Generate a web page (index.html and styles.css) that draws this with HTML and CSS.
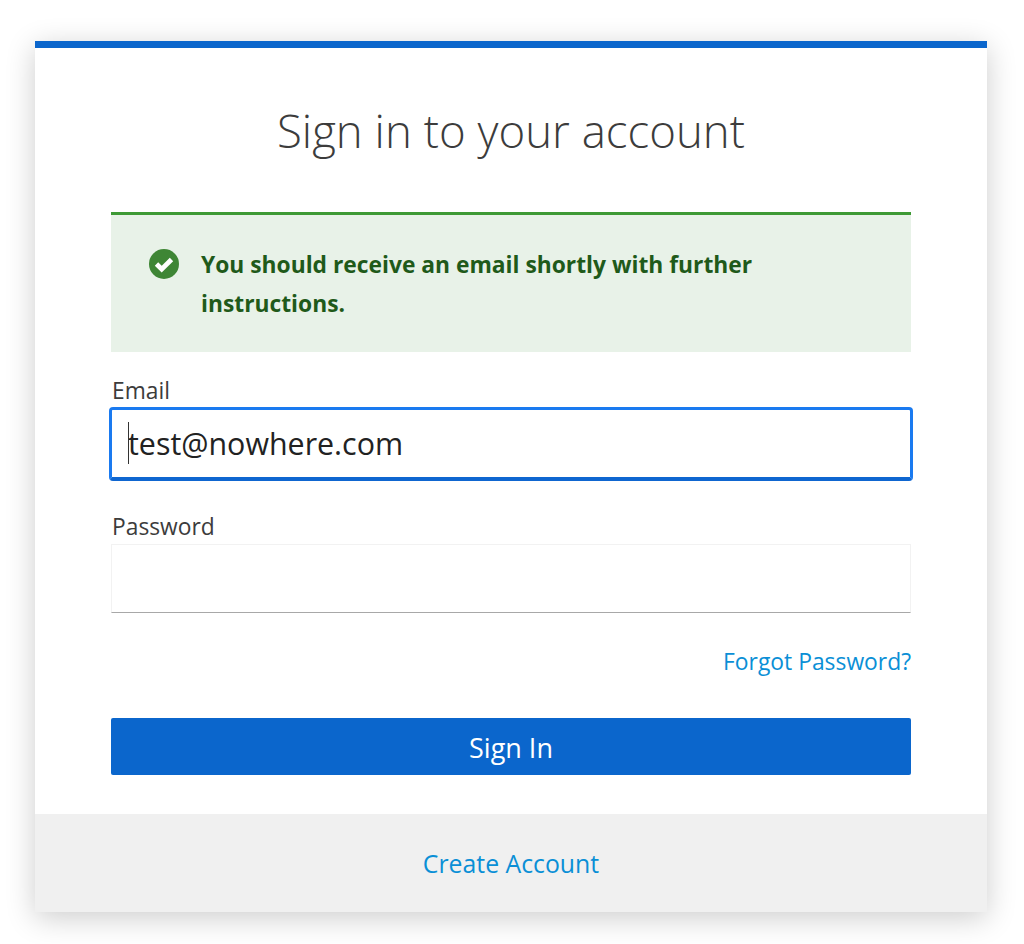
FILE: index.html
```html
<!DOCTYPE html>
<html lang="en">
<head>
    <meta charset="UTF-8">
    <title>Sign in to your account</title>
    <link rel="stylesheet" href="styles.css">
</head>
<body>
    <div class="card">
        <div class="card-body">
            <h1>Sign in to your account</h1>

            <div class="alert">
                <svg class="alert-icon" width="30" height="30" viewBox="0 0 30 30">
                    <circle cx="15" cy="15" r="15" fill="#3e8635"/>
                    <path d="M7.5 15l5.2 5.2L22.5 10.5" fill="none" stroke="#fff" stroke-width="4.8"/>
                </svg>
                <p>You should receive an email shortly with further instructions.</p>
            </div>

            <form>
                <label class="field-label" for="email">Email</label>
                <div class="input-wrap">
                    <input type="text" id="email" class="input input-focus" value="test@nowhere.com">
                    <span class="caret"></span>
                </div>

                <label class="field-label field-label-second" for="password">Password</label>
                <input type="password" id="password" class="input input-plain">

                <div class="forgot-row">
                    <a href="#">Forgot Password?</a>
                </div>

                <button type="button" class="signin-btn">Sign In</button>
            </form>
        </div>

        <div class="card-footer">
            <a href="#">Create Account</a>
        </div>
    </div>
</body>
</html>
```

FILE: styles.css
```css
body {
    margin: 0;
    padding: 41px 37px 32px 35px;
    background-color: #fff;
    font-family: "Open Sans", Arial, sans-serif;
    color: #333;
}

.card {
    border-top: 7px solid #0b66cc;
    background-color: #fff;
    box-shadow: 0 6px 28px rgba(0,0,0,0.2);
}

.card-body {
    padding: 0 76px 39px;
}

h1 {
    margin: 0;
    padding-top: 50px;
    height: 114px;
    font-size: 45.6px;
    line-height: 64px;
    font-weight: 300;
    text-align: center;
    color: #3c3c3c;
}

.alert {
    display: flex;
    box-sizing: border-box;
    height: 140px;
    padding: 30px 40px 0 38px;
    border-top: 3px solid #3e9a35;
    background-color: #e8f2e8;
}

.alert-icon {
    flex: none;
    margin: 4px 22px 0 0;
}

.alert p {
    margin: 0;
    font-size: 22.8px;
    line-height: 39px;
    font-weight: 700;
    color: #1f5a1a;
}

.field-label {
    display: block;
    margin: 23px 0 0;
    padding-left: 1px;
    font-size: 22.8px;
    line-height: 32px;
    color: #3c3c3c;
}

.field-label-second {
    margin: 30px 0 1px;
}

.input-wrap {
    position: relative;
}

.input {
    display: block;
    box-sizing: border-box;
    width: 100%;
    margin: 0;
    outline: none;
    font-family: inherit;
    background-color: #fff;
}

.input-focus {
    height: 74px;
    margin-left: -2px;
    width: calc(100% + 4px);
    padding: 0 16px;
    border: 3px solid #1a7af0;
    border-bottom: 4px solid #0f66d0;
    border-radius: 4px;
    font-size: 30.4px;
    color: #222;
}

.input-plain {
    height: 69px;
    border: 1px solid #f2f2f2;
    border-bottom: 1px solid #a8a8a8;
}

/* kursor w polu email */
.caret {
    position: absolute;
    left: 17px;
    top: 15px;
    width: 1px;
    height: 42px;
    background-color: #333;
}

.forgot-row {
    margin-top: 33px;
    text-align: right;
    font-size: 22.85px;
    line-height: 32px;
}

a {
    color: #0a8fd6;
    text-decoration: none;
}

.signin-btn {
    display: block;
    width: 100%;
    height: 57px;
    margin-top: 40px;
    padding: 2px 0 0;
    border: none;
    border-radius: 2px;
    background-color: #0b66cc;
    color: #fff;
    font-family: inherit;
    font-size: 27px;
    cursor: pointer;
}

.card-footer {
    height: 98px;
    background-color: #f0f0f0;
    font-size: 24.8px;
    line-height: 98px;
    text-align: center;
}
```
